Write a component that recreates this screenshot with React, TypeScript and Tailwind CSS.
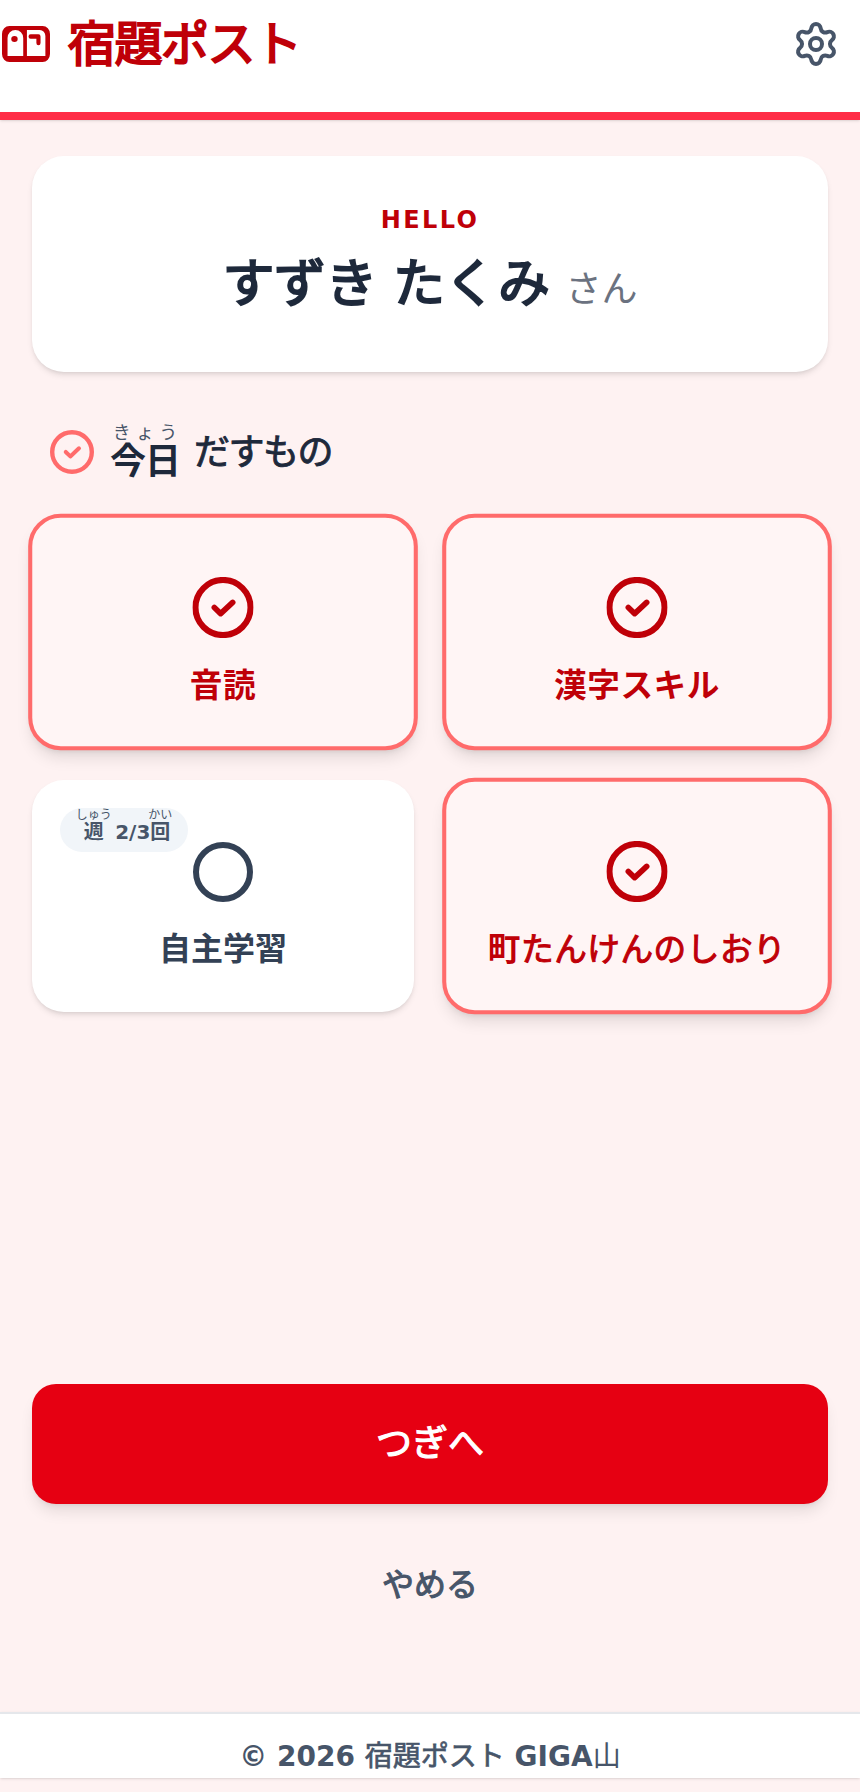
import React from "react";
import { Settings } from "lucide-react";

function Logo() {
  return (
    <svg width="48" height="36" viewBox="0 0 52 36" preserveAspectRatio="none" fill="none" className="shrink-0">
      <path
        fillRule="evenodd"
        clipRule="evenodd"
        fill="#bf0008"
        d="M8 0H44A8 8 0 0 1 52 8V28A8 8 0 0 1 44 36H8A8 8 0 0 1 0 28V8A8 8 0 0 1 8 0ZM6 30H23V12A8.5 8 0 0 0 6 12ZM27 30H47V10A6 6 0 0 0 41 4H27Z"
      />
      <ellipse cx="13.5" cy="13" rx="3.5" ry="3" fill="#bf0008" />
      <path d="M31 10.5H39.5V17" stroke="#bf0008" strokeWidth="4.5" strokeLinejoin="round" strokeLinecap="round" />
    </svg>
  );
}

function CheckCircle({ color, size }: { color: string; size: number }) {
  return (
    <svg width={size} height={size} viewBox="0 0 60 60" fill="none" className="shrink-0">
      <circle cx="30" cy="30" r="27" stroke={color} strokeWidth="6" />
      <path d="M21.5 30L27.7 36L39.5 25" stroke={color} strokeWidth="5.5" strokeLinecap="round" strokeLinejoin="round" />
    </svg>
  );
}

function Tile({ children, done, badge }: { children: React.ReactNode; done: boolean; badge?: boolean }) {
  return (
    <div
      className={
        done
          ? "relative h-[232px] rounded-[32px] border-4 border-[#ff6b6b] bg-[#fff5f5] shadow-lg scale-[1.02] flex flex-col items-center pt-[58px]"
          : "relative h-[232px] rounded-[32px] bg-white shadow-md flex flex-col items-center pt-[62px]"
      }
    >
      {badge && (
        <div className="absolute left-7 top-7 h-11 w-32 rounded-full bg-[#f1f5f9] flex items-center justify-center pb-1.5 text-xl font-bold text-[#475569]">
          <span className="whitespace-nowrap">
            <ruby>
              週<rt className="text-xs font-normal">しゅう</rt>
            </ruby>{" "}
            2/3
            <ruby>
              回<rt className="text-xs font-normal">かい</rt>
            </ruby>
          </span>
        </div>
      )}
      {done ? (
        <CheckCircle color="#bf0008" size={60} />
      ) : (
        <div className="h-[60px] w-[60px] rounded-full border-[6px] border-[#334155]" />
      )}
      <div className={done ? "mt-[23px] text-[32px] leading-[48px] font-bold tracking-[0.5px] text-[#bf0008]" : "mt-[23px] text-[32px] leading-[48px] font-bold text-[#334155]"}>
        {children}
      </div>
    </div>
  );
}

export default function App() {
  return (
    <div
      className="h-[1792px] w-[860px] overflow-hidden bg-[#fef2f2] flex flex-col"
      style={{ fontFamily: '"DejaVu Sans", "Noto Sans CJK JP", sans-serif' }}
    >
      <header className="h-[120px] shrink-0 bg-white border-b-8 border-[#ff2d46] shadow-sm flex items-start justify-between pl-0.5 pr-[20px] pt-5">
        <div className="flex items-center gap-[18px] h-12">
          <Logo />
          <span className="text-5xl font-normal tracking-[-1.5px] text-[#bf0008] [-webkit-text-stroke:2px_#bf0008]">宿題ポスト</span>
        </div>
        <Settings size={48} strokeWidth={2} className="text-[#475569]" />
      </header>

      <main className="flex-1 px-8 pt-9 flex flex-col">
        <section className="h-[216px] rounded-[32px] bg-white shadow-md flex flex-col items-center justify-center pb-1">
          <div className="text-2xl font-bold tracking-widest text-[#bf0008]">HELLO</div>
          <div className="flex items-baseline gap-4 mt-3">
            <span className="text-[52px] leading-[72px] font-normal tracking-[-0.5px] text-[#1e293b] [-webkit-text-stroke:2px_#1e293b]">すずき たくみ</span>
            <span className="text-4xl text-[#6b7280]">さん</span>
          </div>
        </section>

        <div className="mt-12 mb-8 ml-[18px] flex items-center gap-4 h-[64px]">
          <CheckCircle color="#ff6b6b" size={44} />
          <h2 className="text-4xl font-normal text-[#1e293b] flex items-center">
            <ruby className="font-bold tracking-[-1px]">
              今日<rt className="text-lg font-normal tracking-normal text-[#475569]">きょう</rt>
            </ruby>
            <span className="ml-3.5 tracking-[-1.5px] translate-y-px [-webkit-text-stroke:0.9px_#1e293b]">だすもの</span>
          </h2>
        </div>

        <div className="grid grid-cols-2 gap-8">
          <Tile done>音読</Tile>
          <Tile done>漢字スキル</Tile>
          <Tile done={false} badge>自主学習</Tile>
          <Tile done>
            町<span className="font-normal [-webkit-text-stroke:1px_#bf0008]">たんけんのしおり</span>
          </Tile>
        </div>

        <div className="mt-auto pb-[103px]">
          <button className="h-[120px] w-full rounded-3xl bg-[#e60012] text-4xl font-normal text-white shadow-lg [-webkit-text-stroke:1.2px_#ffffff]">つぎへ</button>
          <div className="mt-[57px] text-center text-[32px] leading-[48px] font-normal text-[#475569] [-webkit-text-stroke:1.1px_#475569]">やめる</div>
        </div>
      </main>

      <footer className="h-[66px] shrink-0 mb-3.5 bg-white border-t-2 border-[#e5e7eb] shadow-sm flex items-end justify-center text-[28px] leading-[42px] font-bold text-[#475569]">
        <span>
          © 2026 <span className="font-normal [-webkit-text-stroke:0.7px_#475569]">宿題ポスト</span> GIGA<span className="font-normal">山</span>
        </span>
      </footer>
    </div>
  );
}
